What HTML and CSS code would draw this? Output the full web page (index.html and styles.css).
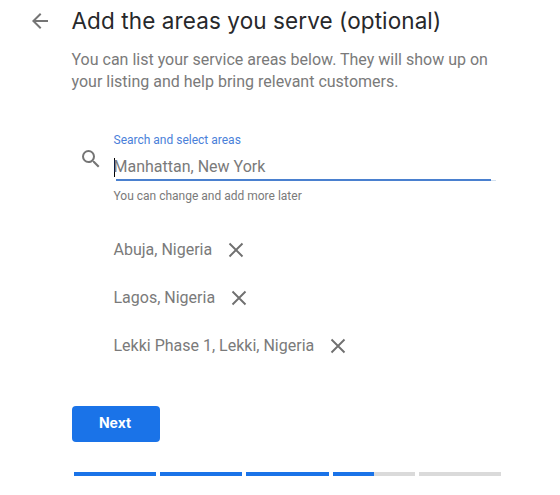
FILE: index.html
```html
<!DOCTYPE html>
<html lang="en">
<head>
<meta charset="utf-8">
<title>Add the areas you serve</title>
<link rel="stylesheet" href="styles.css">
</head>
<body>
<main class="page">
  <header class="header">
    <svg class="back" width="24" height="24" viewBox="0 0 24 24"><path d="M20 11H7.83l5.59-5.59L12 4l-8 8 8 8 1.41-1.41L7.83 13H20v-2z"/></svg>
    <h1 class="title">Add the areas you serve (optional)</h1>
  </header>
  <p class="intro">You can list your service areas below. They will show up on<br>your listing and help bring relevant customers.</p>
  <section class="search">
    <svg class="search-icon" width="24" height="24" viewBox="0 0 24 24"><path d="M15.5 14h-.79l-.28-.27A6.471 6.471 0 0 0 16 9.5 6.5 6.5 0 1 0 9.5 16c1.61 0 3.09-.59 4.23-1.57l.27.28v.79l5 4.99L20.49 19l-4.99-5zm-6 0C7.01 14 5 11.99 5 9.5S7.01 5 9.5 5 14 7.01 14 9.5 11.99 14 9.5 14z"/></svg>
    <div class="field">
      <div class="label">Search and select areas</div>
      <div class="input"><span class="caret"></span><span class="placeholder">Manhattan, New York</span></div>
      <div class="underline"></div>
      <div class="hint">You can change and add more later</div>
    </div>
  </section>
  <ul class="areas">
    <li class="area"><span>Abuja, Nigeria</span><svg class="remove" width="24" height="24" viewBox="0 0 24 24"><path d="M5.5 5.5l13 13M18.5 5.5l-13 13"/></svg></li>
    <li class="area"><span>Lagos, Nigeria</span><svg class="remove" width="24" height="24" viewBox="0 0 24 24"><path d="M5.5 5.5l13 13M18.5 5.5l-13 13"/></svg></li>
    <li class="area"><span>Lekki Phase 1, Lekki, Nigeria</span><svg class="remove" width="24" height="24" viewBox="0 0 24 24"><path d="M5.5 5.5l13 13M18.5 5.5l-13 13"/></svg></li>
  </ul>
  <button class="next">Next</button>
  <div class="progress">
    <span class="step done"></span>
    <span class="step done"></span>
    <span class="step done"></span>
    <span class="step half"></span>
    <span class="step"></span>
  </div>
</main>
</body>
</html>
```

FILE: styles.css
```css
* { box-sizing: border-box; }
body {
  margin: 0;
  background: #fff;
  color: #7a7a7a;
  font: 16px/22px Roboto, sans-serif;
}
.page { padding: 5px 59px 0 72px; }
.header {
  display: flex;
  align-items: center;
  gap: 19.5px;
  height: 32px;
  margin-left: -44px;
}
.back, .search-icon { fill: #757575; flex: none; }
.title {
  margin: 0;
  color: #27282b;
  font: 370 22.5px/32px Inter, sans-serif;
  letter-spacing: 0.1px;
  white-space: nowrap;
}
.intro { margin: 12px 0 0 -0.5px; white-space: nowrap; }
.search { display: flex; gap: 10.5px; margin: 39px 0 0 7px; }
.search-icon { margin-top: 15px; }
.field { width: 382px; }
.label { color: #4a80d9; font-size: 12px; line-height: 16px; }
.input { display: flex; align-items: center; height: 20px; margin-top: 9px; }
.caret { width: 1px; height: 19px; margin-right: -1px; background: #000; }
.underline {
  height: 2px;
  margin: 2px 0 0 2.5px;
  background:
    linear-gradient(#4a80cf, #4a80cf) 0 0 / 375px 2px no-repeat,
    linear-gradient(#d3e1f0, #d3e1f0) 0 1px / 100% 1px no-repeat;
}
.hint { margin-top: 7px; font-size: 12px; line-height: 16px; }
.areas { list-style: none; margin: 34px 0 0 41.5px; padding: 0; }
.area { display: flex; align-items: center; gap: 11.5px; height: 24px; margin-bottom: 24px; }
.remove { fill: none; stroke: #707070; stroke-width: 1.9; }
.next {
  display: block;
  width: 88px;
  height: 36px;
  margin-top: 48px;
  padding: 0 2px 2px 0;
  border: 0;
  border-radius: 4px;
  background: #1a73e8;
  color: #fff;
  font: 700 14px/20px Inter, sans-serif;
}
.progress { display: flex; gap: 4px; margin: 30px 0 0 2px; }
.step { flex: 1; height: 4px; background: #dadada; }
.done { background: #1a73e8; }
.half { background: linear-gradient(to right, #1a73e8 50%, #dadada 50%); }
```
